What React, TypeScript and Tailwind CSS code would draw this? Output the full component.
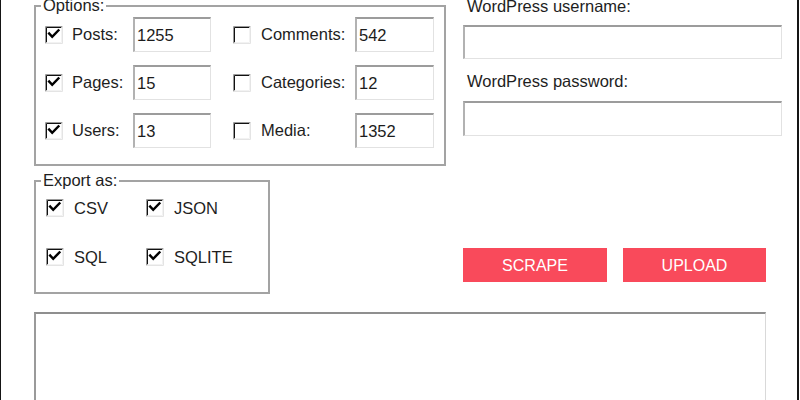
import React from "react";

function Check({ checked }: { checked: boolean }) {
  return (
    <svg width="18" height="18" viewBox="0 0 18 18" className="shrink-0">
      <rect x="0" y="0" width="18" height="18" fill="#ffffff" />
      <path d="M0.5 17.5V0.5H17.5" stroke="#9a9a9a" fill="none" />
      <path d="M1.5 16.5V1.5H16.5" stroke="#111111" fill="none" />
      <path d="M0.5 17.5H17.5V0.5" stroke="#e4e4e4" fill="none" />
      <path d="M1.5 16.5H16.5V1.5" stroke="#f2f2f2" fill="none" />
      {checked && (
        <path d="M4.2 7.6L7.2 10.8L13.4 4.4" stroke="#000000" strokeWidth="2.5" fill="none" strokeLinecap="square" />
      )}
    </svg>
  );
}

function Field({ value, w, h = "h-[35px]" }: { value?: string; w: string; h?: string }) {
  return (
    <div
      className={`${w} ${h} shrink-0 flex items-center pl-[2px] bg-white border-t-2 border-l-2 border-r border-b border-t-[#9c9c9c] border-l-[#b2b2b2] border-r-[#e2e2e2] border-b-[#e2e2e2] text-[#1c1c1c]`}
    >
      {value}
    </div>
  );
}

function Row({
  l,
  lv,
  lc,
  r,
  rv,
}: {
  l: string;
  lv: string;
  lc: boolean;
  r: string;
  rv: string;
}) {
  return (
    <div className="flex items-center h-[35px]">
      <Check checked={lc} />
      <span className="ml-[9px] w-[61px] shrink-0">{l}</span>
      <Field value={lv} w="w-[78px]" />
      <div className="ml-[22px]">
        <Check checked={false} />
      </div>
      <span className="ml-[10px] w-[94px] shrink-0">{r}</span>
      <Field value={rv} w="w-[79px]" />
    </div>
  );
}

export default function App() {
  return (
    <div className="w-[799px] h-[400px] overflow-hidden bg-white border-l border-r-2 border-[#151515] font-['Liberation_Sans',Arial,sans-serif] text-[16.5px] text-[#1e1e1e] leading-[19px]">
      <div className="flex pl-[33px]">
        <div className="flex flex-col w-[412px] pt-[5px]">
          <div className="relative border-2 border-[#a3a3a3] h-[161px] pt-[10px] pl-[9px] flex flex-col gap-[13px]">
            <span className="absolute left-[5px] top-[-11px] px-[2px] bg-white leading-[19px]">Options:</span>
            <Row l="Posts:" lv="1255" lc={true} r="Comments:" rv="542" />
            <Row l="Pages:" lv="15" lc={true} r="Categories:" rv="12" />
            <Row l="Users:" lv="13" lc={true} r="Media:" rv="1352" />
          </div>
          <div className="relative mt-[14px] border-2 border-[#a3a3a3] w-[236px] h-[114px] pt-[16px] pl-[10px] grid grid-cols-[100px_100px] gap-y-[29px] content-start">
            <span className="absolute left-[5px] top-[-11px] px-[2px] bg-white leading-[19px]">Export as:</span>
            {["CSV", "JSON", "SQL", "SQLITE"].map((t) => (
              <div key={t} className="flex items-center h-[20px]">
                <Check checked={true} />
                <span className="ml-[10px]">{t}</span>
              </div>
            ))}
          </div>
        </div>
        <div className="ml-[17px] w-[319px] flex flex-col mt-[-3px]">
          <span className="pl-[4px] leading-[19px]">WordPress username:</span>
          <div className="mt-[9px]">
            <Field w="w-[319px]" h="h-[34px]" />
          </div>
          <span className="mt-[13px] pl-[4px] leading-[19px]">WordPress password:</span>
          <div className="mt-[10px]">
            <Field w="w-[319px]" />
          </div>
          <div className="mt-[112px] flex gap-[16px]">
            <button className="w-[144px] h-[34px] bg-[#f94a5b] text-white text-[16px] flex items-center justify-center">
              SCRAPE
            </button>
            <button className="w-[143px] h-[34px] bg-[#f94a5b] text-white text-[16px] flex items-center justify-center">
              UPLOAD
            </button>
          </div>
        </div>
      </div>
      <div className="ml-[33px] mt-[18px] w-[732px] h-[120px] bg-white border-t-2 border-l-2 border-r border-t-[#8f8f8f] border-l-[#9a9a9a] border-r-[#d9d9d9]" />
    </div>
  );
}
